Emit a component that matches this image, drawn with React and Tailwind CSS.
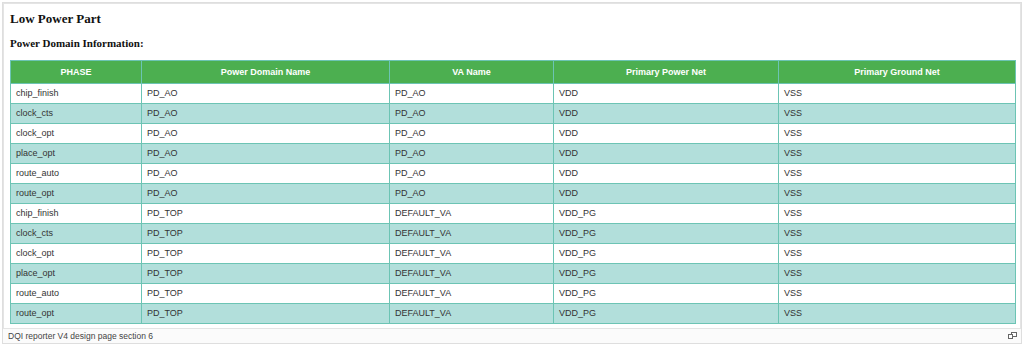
import React from "react";

const rows = [
  ["chip_finish", "PD_AO", "PD_AO", "VDD", "VSS"],
  ["clock_cts", "PD_AO", "PD_AO", "VDD", "VSS"],
  ["clock_opt", "PD_AO", "PD_AO", "VDD", "VSS"],
  ["place_opt", "PD_AO", "PD_AO", "VDD", "VSS"],
  ["route_auto", "PD_AO", "PD_AO", "VDD", "VSS"],
  ["route_opt", "PD_AO", "PD_AO", "VDD", "VSS"],
  ["chip_finish", "PD_TOP", "DEFAULT_VA", "VDD_PG", "VSS"],
  ["clock_cts", "PD_TOP", "DEFAULT_VA", "VDD_PG", "VSS"],
  ["clock_opt", "PD_TOP", "DEFAULT_VA", "VDD_PG", "VSS"],
  ["place_opt", "PD_TOP", "DEFAULT_VA", "VDD_PG", "VSS"],
  ["route_auto", "PD_TOP", "DEFAULT_VA", "VDD_PG", "VSS"],
  ["route_opt", "PD_TOP", "DEFAULT_VA", "VDD_PG", "VSS"],
];

const headers = ["PHASE", "Power Domain Name", "VA Name", "Primary Power Net", "Primary Ground Net"];
const widths = ["w-[131px]", "w-[248px]", "w-[164px]", "w-[225px]", "w-[237px]"];

export default function App() {
  return (
    <div className="w-[1024px] h-[347px] bg-white p-[2px]">
      <div className="h-[342px] border border-[#dedede] bg-[#fbfbfb] flex flex-col">
        <div className="border border-[#e4e4e4] bg-white pl-[6px] pr-[4px] pt-[7px] pb-[4px]">
          <div className="text-[13px] leading-[16px] font-bold text-[#111] [font-family:'Liberation_Serif',serif]">
            Low Power Part
          </div>
          <div className="mt-[9px] text-[11px] leading-[14px] font-bold text-[#111] [font-family:'Liberation_Serif',serif]">
            Power Domain Information:
          </div>
          <table className="mt-[10px] w-[1005px] table-fixed border-collapse [font-family:'Liberation_Sans',Arial,sans-serif] text-[9px]">
            <colgroup>
              {widths.map((w, i) => (
                <col key={i} className={w} />
              ))}
            </colgroup>
            <thead>
              <tr className="h-[23px] bg-[#4caf50]">
                {headers.map((h) => (
                  <th
                    key={h}
                    className="border border-[#6cc4b4] text-center font-bold text-white p-0 leading-[11px]"
                  >
                    {h}
                  </th>
                ))}
              </tr>
            </thead>
            <tbody>
              {rows.map((r, i) => (
                <tr key={i} className={`h-[20px] ${i % 2 === 1 ? "bg-[#b2dfdb]" : "bg-white"}`}>
                  {r.map((c, j) => (
                    <td
                      key={j}
                      className="border border-[#6cc4b4] pl-[5px] py-0 text-[#333] leading-[11px]"
                    >
                      {c}
                    </td>
                  ))}
                </tr>
              ))}
            </tbody>
          </table>
        </div>
        <div className="flex items-center justify-between h-[15px] pl-[5px] pr-[4px]">
          <span className="text-[8.5px] leading-[12px] text-[#444] [font-family:'Liberation_Sans',Arial,sans-serif]">
            DQI reporter V4 design page section 6
          </span>
          <svg width="9" height="7" viewBox="0 0 9 7" className="mt-[-2px]">
            <rect x="3.5" y="0.5" width="5" height="4" fill="white" stroke="#666" strokeWidth="1" />
            <rect x="0.5" y="2.5" width="4" height="4" fill="white" stroke="#666" strokeWidth="1" />
          </svg>
        </div>
      </div>
    </div>
  );
}
